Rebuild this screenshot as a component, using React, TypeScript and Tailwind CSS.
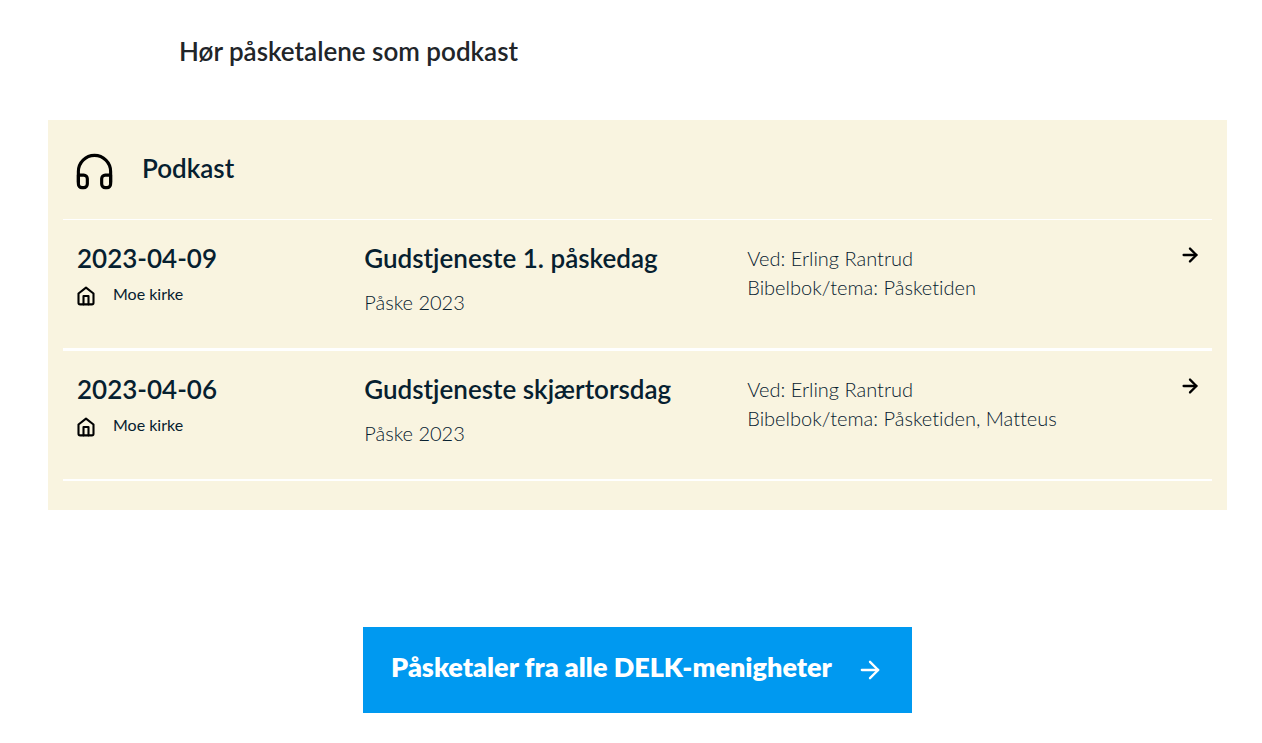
import { FiArrowRight, FiHeadphones, FiHome } from "react-icons/fi";

interface Episode {
    id: number;
    date: string;
    church: string;
    title: string;
    series: string;
    speaker: string;
    topic: string;
}

const EPISODES: Episode[] = [
    {
        id: 1,
        date: "2023-04-09",
        church: "Moe kirke",
        title: "Gudstjeneste 1. påskedag",
        series: "Påske 2023",
        speaker: "Erling Rantrud",
        topic: "Påsketiden",
    },
    {
        id: 2,
        date: "2023-04-06",
        church: "Moe kirke",
        title: "Gudstjeneste skjærtorsdag",
        series: "Påske 2023",
        speaker: "Erling Rantrud",
        topic: "Påsketiden, Matteus",
    },
];

function EpisodeRow({ episode }: { episode: Episode }) {
    return (
        <li className="grid grid-cols-12 border-b-[3px] border-white pt-[22px] pb-8 last:border-b-2">
            <div className="col-span-3 px-3.5">
                <p className="text-[26px] leading-8 font-semibold">{episode.date}</p>
                <div className="mt-2 flex items-start gap-[17px]">
                    <FiHome size={20} strokeWidth={2.5} className="-ml-px mt-1 text-black" />
                    <span className="text-[16px] leading-6">{episode.church}</span>
                </div>
            </div>
            <div className="col-span-4 px-3.5">
                <h3 className="text-[26px] leading-8 font-semibold whitespace-nowrap">{episode.title}</h3>
                <p className="mt-[14px] text-[20px] leading-7 font-light">{episode.series}</p>
            </div>
            <div className="col-span-4 px-3.5 pt-0.5 text-[20px] leading-[29px] font-light">
                <p>Ved: {episode.speaker}</p>
                <p>Bibelbok/tema: {episode.topic}</p>
            </div>
            <div className="flex items-start justify-end pt-0.5 pr-[11px]">
                <a href="#" aria-label={episode.title} className="text-black">
                    <FiArrowRight size={22} strokeWidth={2.5} />
                </a>
            </div>
        </li>
    );
}

export default function App() {
    return (
        <main className="bg-white pt-[31px] pr-[35px] pb-[30px] pl-12 font-['Lato',sans-serif] text-[#06202f] [font-variant-ligatures:no-common-ligatures]">
            <h1 className="pl-[131px] text-[26px] leading-10 font-semibold text-[#212529]">
                Hør påsketalene som podkast
            </h1>

            {/* Podcast panel */}
            <section className="mt-[49px] bg-[#f9f4e0] px-[15px] pb-[29px]">
                <header className="flex h-[100px] items-center gap-[26px] border-b border-white px-2.5">
                    <FiHeadphones size={43} strokeWidth={1.75} className="mt-1 text-black" />
                    <h2 className="pb-1 text-[26px] leading-8 font-semibold">Podkast</h2>
                </header>
                <ul>
                    {EPISODES.map((episode) => (
                        <EpisodeRow key={episode.id} episode={episode} />
                    ))}
                </ul>
            </section>

            {/* Link to all talks */}
            <div className="mt-[117px] flex justify-center">
                <a href="#" className="flex h-[86px] items-center gap-6 bg-[#0099f0] px-7 text-white">
                    <span className="pb-1.5 text-[27px] leading-8 font-extrabold">Påsketaler fra alle DELK-menigheter</span>
                    <FiArrowRight size={28} />
                </a>
            </div>
        </main>
    );
}
